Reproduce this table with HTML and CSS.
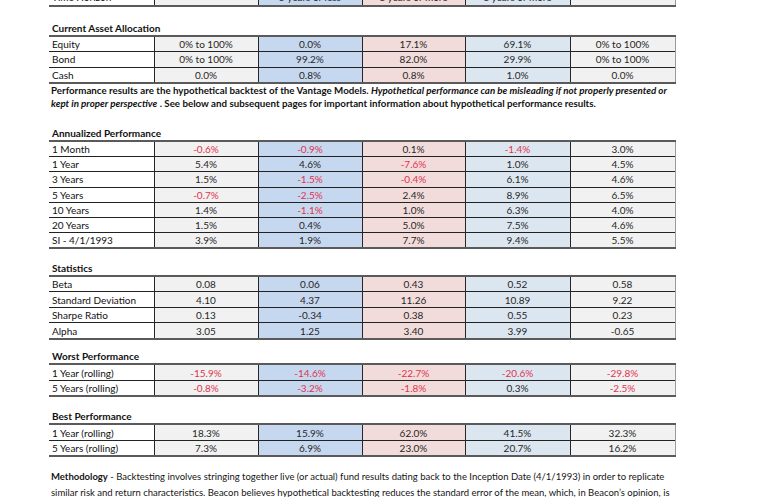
FILE: index.html
```html
<!DOCTYPE html>
<html>
<head>
<meta charset="utf-8">
<link rel="stylesheet" href="styles.css">
</head>
<body>
<div class="page">
  <table class="grid first">
    <colgroup><col class="c0"><col class="c1"><col class="c2"><col class="c3"><col class="c4"><col class="c5"></colgroup>
    <tr><td class="lab">Time Horizon</td><td class="g"></td><td class="b">5 years or less</td><td class="p">8 years or more</td><td class="lb">8 years or more</td><td class="g"></td></tr>
  </table>

  <h2 class="head h1">Current Asset Allocation</h2>
  <table class="grid">
    <colgroup><col class="c0"><col class="c1"><col class="c2"><col class="c3"><col class="c4"><col class="c5"></colgroup>
    <tr><td class="lab">Equity</td><td class="g">0% to 100%</td><td class="b">0.0%</td><td class="p">17.1%</td><td class="lb">69.1%</td><td class="g">0% to 100%</td></tr>
    <tr><td class="lab">Bond</td><td class="g">0% to 100%</td><td class="b">99.2%</td><td class="p">82.0%</td><td class="lb">29.9%</td><td class="g">0% to 100%</td></tr>
    <tr><td class="lab">Cash</td><td class="g">0.0%</td><td class="b">0.8%</td><td class="p">0.8%</td><td class="lb">1.0%</td><td class="g">0.0%</td></tr>
  </table>
  <p class="note">Performance results are the hypothetical backtest of the Vantage Models. <em>Hypothetical performance can be misleading if not properly presented or kept in proper perspective</em> . See below and subsequent pages for important information about hypothetical performance results.</p>

  <h2 class="head h2">Annualized Performance</h2>
  <table class="grid ann">
    <colgroup><col class="c0"><col class="c1"><col class="c2"><col class="c3"><col class="c4"><col class="c5"></colgroup>
    <tr><td class="lab">1 Month</td><td class="g neg">-0.6%</td><td class="b neg">-0.9%</td><td class="p">0.1%</td><td class="lb neg">-1.4%</td><td class="g">3.0%</td></tr>
    <tr><td class="lab">1 Year</td><td class="g">5.4%</td><td class="b">4.6%</td><td class="p neg">-7.6%</td><td class="lb">1.0%</td><td class="g">4.5%</td></tr>
    <tr><td class="lab">3 Years</td><td class="g">1.5%</td><td class="b neg">-1.5%</td><td class="p neg">-0.4%</td><td class="lb">6.1%</td><td class="g">4.6%</td></tr>
    <tr><td class="lab">5 Years</td><td class="g neg">-0.7%</td><td class="b neg">-2.5%</td><td class="p">2.4%</td><td class="lb">8.9%</td><td class="g">6.5%</td></tr>
    <tr><td class="lab">10 Years</td><td class="g">1.4%</td><td class="b neg">-1.1%</td><td class="p">1.0%</td><td class="lb">6.3%</td><td class="g">4.0%</td></tr>
    <tr><td class="lab">20 Years</td><td class="g">1.5%</td><td class="b">0.4%</td><td class="p">5.0%</td><td class="lb">7.5%</td><td class="g">4.6%</td></tr>
    <tr><td class="lab">SI - 4/1/1993</td><td class="g">3.9%</td><td class="b">1.9%</td><td class="p">7.7%</td><td class="lb">9.4%</td><td class="g">5.5%</td></tr>
  </table>

  <h2 class="head h3">Statistics</h2>
  <table class="grid">
    <colgroup><col class="c0"><col class="c1"><col class="c2"><col class="c3"><col class="c4"><col class="c5"></colgroup>
    <tr><td class="lab">Beta</td><td class="g">0.08</td><td class="b">0.06</td><td class="p">0.43</td><td class="lb">0.52</td><td class="g">0.58</td></tr>
    <tr><td class="lab">Standard Deviation</td><td class="g">4.10</td><td class="b">4.37</td><td class="p">11.26</td><td class="lb">10.89</td><td class="g">9.22</td></tr>
    <tr><td class="lab">Sharpe Ratio</td><td class="g">0.13</td><td class="b">-0.34</td><td class="p">0.38</td><td class="lb">0.55</td><td class="g">0.23</td></tr>
    <tr><td class="lab">Alpha</td><td class="g">3.05</td><td class="b">1.25</td><td class="p">3.40</td><td class="lb">3.99</td><td class="g">-0.65</td></tr>
  </table>

  <h2 class="head">Worst Performance</h2>
  <table class="grid">
    <colgroup><col class="c0"><col class="c1"><col class="c2"><col class="c3"><col class="c4"><col class="c5"></colgroup>
    <tr><td class="lab">1 Year (rolling)</td><td class="g neg">-15.9%</td><td class="b neg">-14.6%</td><td class="p neg">-22.7%</td><td class="lb neg">-20.6%</td><td class="g neg">-29.8%</td></tr>
    <tr><td class="lab">5 Years (rolling)</td><td class="g neg">-0.8%</td><td class="b neg">-3.2%</td><td class="p neg">-1.8%</td><td class="lb">0.3%</td><td class="g neg">-2.5%</td></tr>
  </table>

  <h2 class="head h5">Best Performance</h2>
  <table class="grid">
    <colgroup><col class="c0"><col class="c1"><col class="c2"><col class="c3"><col class="c4"><col class="c5"></colgroup>
    <tr><td class="lab">1 Year (rolling)</td><td class="g">18.3%</td><td class="b">15.9%</td><td class="p">62.0%</td><td class="lb">41.5%</td><td class="g">32.3%</td></tr>
    <tr><td class="lab">5 Years (rolling)</td><td class="g">7.3%</td><td class="b">6.9%</td><td class="p">23.0%</td><td class="lb">20.7%</td><td class="g">16.2%</td></tr>
  </table>

  <p class="method"><strong>Methodology</strong> - Backtesting involves stringing together live (or actual) fund results dating back to the Inception Date (4/1/1993) in order to replicate similar risk and return characteristics. Beacon believes hypothetical backtesting reduces the standard error of the mean, which, in Beacon’s opinion, is</p>
</div>
</body>
</html>
```

FILE: styles.css
```css
html, body {
  margin: 0;
  padding: 0;
  background: #ffffff;
}
body {
  font-family: "Lato", "Open Sans", sans-serif;
  font-size: 10px;
  color: #151515;
  overflow: hidden;
}
.page {
  width: 626px;
  padding-left: 49px;
}
.grid {
  border-collapse: collapse;
  table-layout: fixed;
  width: 626px;
  border-top: 2px solid #5a5a5a;
  border-bottom: 2px solid #5a5a5a;
}
.grid.first {
  margin-top: -10px;
  border-top: none;
}
.c0 { width: 105px; }
.c1 { width: 104px; }
.c2 { width: 104px; }
.c3 { width: 103px; }
.c4 { width: 105px; }
.c5 { width: 105px; }
.grid tr { border-bottom: 1px solid #222; }
.grid td {
  height: 14.5px;
  padding: 0;
  line-height: 14px;
  text-align: center;
  color: #262626;
  border-left: 1px solid #262626;
  white-space: nowrap;
  overflow: hidden;
}
.grid td:last-child { border-right: 1px solid #9a9a9a; }
.grid.ann td { height: 14.2px; }
.grid td.lab {
  text-align: left;
  padding-left: 3px;
  border-left: none;
  color: #111111;
  background: #ffffff;
}
.g { background: #f1f1f1; }
.b { background: #c6d8ef; }
.p { background: #f2dcdb; }
.lb { background: #dce6f1; }
.grid td.neg { color: #e2324e; }
.head {
  margin: 9.5px 0 0 3px;
  font-size: 10px;
  font-weight: bold;
  line-height: 14px;
  color: #111111;
}
.head.h1 { margin-top: 14px; }
.head.h2 { margin-top: 16px; }
.head.h3 { margin-top: 11.5px; }
.head.h5 { margin-top: 12px; }
.note {
  margin: 0;
  padding-left: 2px;
  font-size: 9.75px;
  font-weight: bold;
  line-height: 13px;
  color: #111111;
  width: 620px;
}
.note em { font-style: italic; }
.method {
  margin: 12px 0 0 2px;
  font-size: 9.5px;
  line-height: 16px;
  color: #151515;
  width: 630px;
}
.method strong { font-weight: bold; }
```
